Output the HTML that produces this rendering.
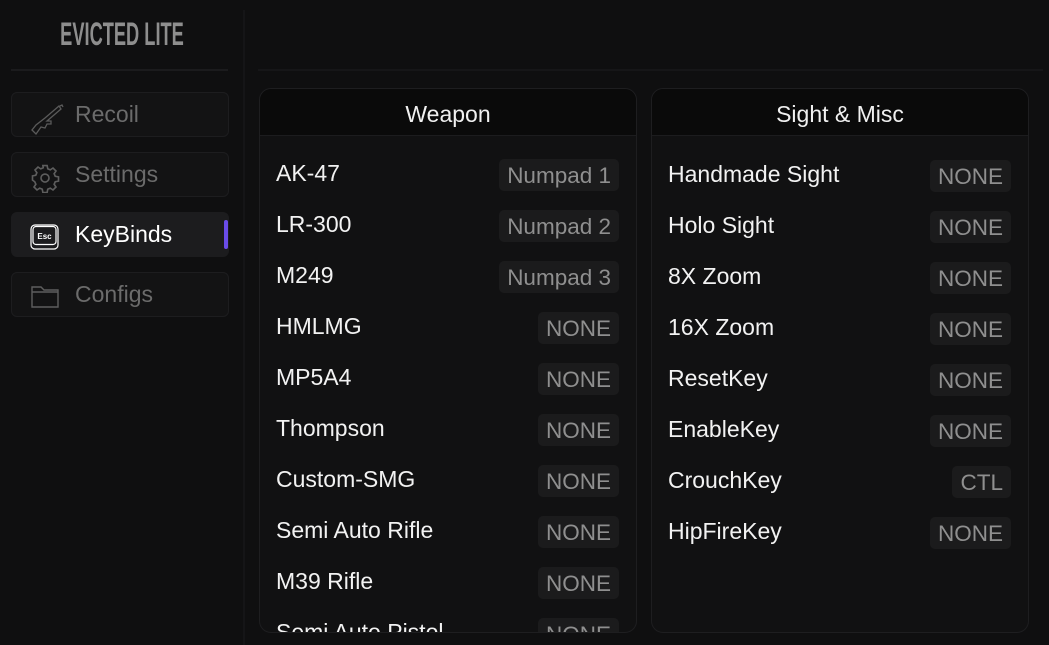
<!DOCTYPE html>
<html><head><style>
*{margin:0;padding:0;box-sizing:border-box}
body{width:1049px;height:645px;background:#0f0f10;font-family:"Liberation Sans",sans-serif;position:relative;overflow:hidden;color:#eee}
.abs{position:absolute}
.title{left:0;width:244px;top:16px;text-align:center;font-family:"Liberation Sans Narrow","Liberation Sans",sans-serif;font-weight:bold;font-size:32px;color:#8e8e8e;transform:scaleX(.57);transform-origin:122px 0}
.nav{left:11px;width:218px;height:45px;border:1px solid #1d1d1f;border-radius:6px;background:#131314;font-size:23px;color:#6b6b6b}
.nav span{position:absolute;left:63px;top:8px}
.nav svg{position:absolute;left:18px;top:10px}
.nav.act{background:#1c1c1e;border-color:#1c1c1e;color:#fff}
.panel{top:88px;height:545px;border:1px solid #1e1e20;border-radius:12px;background:#111112;overflow:hidden}
.ph{height:47px;background:#0a0a0a;border-bottom:1px solid #1c1c1e;text-align:center;font-size:23px;line-height:50px;color:#f0f0f0}
.row{position:absolute;left:16px;right:17px;height:32px}
.row .l{position:absolute;left:0;top:1px;font-size:23px;color:#f2f2f2}
.row .k{position:absolute;right:0;top:0;height:32px;padding:0 8px;background:#1b1b1c;border-radius:5px;font-size:22.5px;line-height:33px;color:#8f8f8f}
</style></head><body>
<div class="abs title">EVICTED LITE</div>
<div class="abs" style="left:11px;top:69px;width:217px;height:2px;background:#1b1b1d"></div>
<div class="abs" style="left:243px;top:10px;width:2px;height:635px;background:#151517"></div>
<div class="abs" style="left:258px;top:69px;width:785px;height:2px;background:#161618"></div>

<div class="abs nav" style="top:92px"><svg width="36" height="32" viewBox="0 0 36 32" fill="none" stroke="#5a5a5a" stroke-width="1.3"><path d="M2 27l4 4 5-7 4 1 2-4 4 0 0-3-4 0 14-12-2-3-14 12-9 7z M30 3l2-1 1 2"/></svg><span>Recoil</span></div>
<div class="abs nav" style="top:152px"><svg width="30" height="30" viewBox="0 0 24 24" fill="none" stroke="#5e5e5e" stroke-width="1.3"><circle cx="12" cy="12" r="3.2"/><path d="M10.3 2h3.4l.5 2.6 2 .9 2.2-1.5 2.4 2.4-1.5 2.2.9 2 2.6.5v3.4l-2.6.5-.9 2 1.5 2.2-2.4 2.4-2.2-1.5-2 .9-.5 2.6h-3.4l-.5-2.6-2-.9-2.2 1.5-2.4-2.4 1.5-2.2-.9-2L2 13.7v-3.4l2.6-.5.9-2-1.5-2.2 2.4-2.4 2.2 1.5 2-.9z"/></svg><span>Settings</span></div>
<div class="abs nav act" style="top:212px"><svg width="30" height="28" viewBox="0 0 30 28" fill="none" stroke="#fff" stroke-width="1.2"><rect x="1" y="2" width="27" height="24" rx="4"/><rect x="3" y="3.5" width="23" height="18" rx="3"/><text x="14.5" y="16" font-size="8" fill="#fff" stroke="none" text-anchor="middle" font-family="Liberation Sans" font-weight="bold">Esc</text></svg><span>KeyBinds</span></div>
<div class="abs" style="left:224px;top:220px;width:4px;height:29px;background:#6a4ce8;border-radius:2px"></div>
<div class="abs nav" style="top:272px"><svg width="30" height="26" viewBox="0 0 30 26" fill="none" stroke="#5e5e5e" stroke-width="1.4"><path d="M2 4h9l3 3h14v17H2z M2 9h26"/></svg><span>Configs</span></div>

<div class="abs panel" style="left:259px;width:378px">
<div class="ph">Weapon</div>
<div class="row" style="top:70px"><span class="l">AK-47</span><span class="k">Numpad 1</span></div>
<div class="row" style="top:121px"><span class="l">LR-300</span><span class="k">Numpad 2</span></div>
<div class="row" style="top:172px"><span class="l">M249</span><span class="k">Numpad 3</span></div>
<div class="row" style="top:223px"><span class="l">HMLMG</span><span class="k">NONE</span></div>
<div class="row" style="top:274px"><span class="l">MP5A4</span><span class="k">NONE</span></div>
<div class="row" style="top:325px"><span class="l">Thompson</span><span class="k">NONE</span></div>
<div class="row" style="top:376px"><span class="l">Custom-SMG</span><span class="k">NONE</span></div>
<div class="row" style="top:427px"><span class="l">Semi Auto Rifle</span><span class="k">NONE</span></div>
<div class="row" style="top:478px"><span class="l">M39 Rifle</span><span class="k">NONE</span></div>
<div class="row" style="top:529px"><span class="l">Semi Auto Pistol</span><span class="k">NONE</span></div>
</div>

<div class="abs panel" style="left:651px;width:378px">
<div class="ph">Sight &amp; Misc</div>
<div class="row" style="top:71px"><span class="l">Handmade Sight</span><span class="k">NONE</span></div>
<div class="row" style="top:122px"><span class="l">Holo Sight</span><span class="k">NONE</span></div>
<div class="row" style="top:173px"><span class="l">8X Zoom</span><span class="k">NONE</span></div>
<div class="row" style="top:224px"><span class="l">16X Zoom</span><span class="k">NONE</span></div>
<div class="row" style="top:275px"><span class="l">ResetKey</span><span class="k">NONE</span></div>
<div class="row" style="top:326px"><span class="l">EnableKey</span><span class="k">NONE</span></div>
<div class="row" style="top:377px"><span class="l">CrouchKey</span><span class="k">CTL</span></div>
<div class="row" style="top:428px"><span class="l">HipFireKey</span><span class="k">NONE</span></div>
</div>
</body></html>
